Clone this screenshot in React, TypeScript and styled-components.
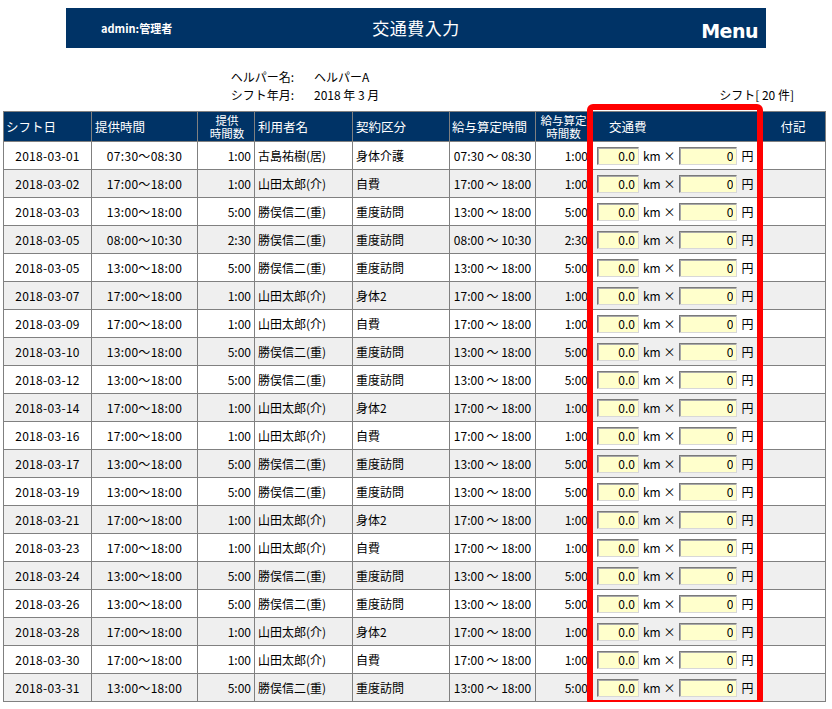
import React from 'react';
import styled, { createGlobalStyle } from 'styled-components';

const GlobalStyle = createGlobalStyle`
  html, body {
    margin: 0;
    padding: 0;
    background: #ffffff;
  }
  body {
    font-family: "Noto Sans CJK JP", "Liberation Sans", sans-serif;
    color: #000;
  }
`

const Page = styled.div`
  position: relative;
  width: 832px;
  padding-top: 8px;
`

const TopBar = styled.div`
  width: 700px;
  height: 40px;
  margin: 0 auto;
  background: #003366;
  color: #fff;
  display: grid;
  grid-template-columns: 1fr auto 1fr;
  align-items: center;
`

const UserName = styled.div`
  padding-left: 35px;
  font-size: 11px;
  font-weight: bold;
`

const Title = styled.div`
  font-size: 17px;
  letter-spacing: 0.5px;
  margin-top: -2px;
`

const MenuLink = styled.div`
  justify-self: end;
  padding-right: 8px;
  padding-top: 6px;
  font-family: "DejaVu Sans", sans-serif;
  font-size: 19px;
  font-weight: bold;
  letter-spacing: -0.5px;
`

const InfoArea = styled.div`
  display: flex;
  align-items: flex-end;
  margin-top: 20px;
  padding-left: 220px;
  padding-right: 38px;
  font-size: 12px;
`

const InfoGrid = styled.div`
  display: grid;
  grid-template-columns: 74px auto;
  column-gap: 20px;
  line-height: 18px;
`

const InfoLabel = styled.div`
  text-align: right;
`

const Count = styled.div`
  margin-left: auto;
  line-height: 18px;
`

const Table = styled.table`
  margin: 7px 0 0 3px;
  width: 822px;
  table-layout: fixed;
  border-collapse: collapse;
  font-size: 12px;
`

const HeadCell = styled.th<{ $align?: string; $pad?: number; $two?: boolean }>`
  height: 29px;
  padding: 0 0 0 ${(p) => p.$pad ?? 2}px;
  background: #003366;
  color: #fff;
  font-weight: normal;
  font-size: ${(p) => (p.$two ? '11.5px' : '12.5px')};
  text-align: ${(p) => p.$align || 'left'};
  line-height: ${(p) => (p.$two ? '13px' : '16px')};
  border: 1px solid #808080;
  white-space: nowrap;
  overflow: hidden;
`

const Row = styled.tr<{ $odd: boolean }>`
  background: ${(p) => (p.$odd ? '#efefef' : '#ffffff')};
`

const Cell = styled.td<{ $align?: string }>`
  height: 27px;
  padding: 0 3px;
  text-align: ${(p) => p.$align || 'left'};
  border: 1px solid #808080;
  white-space: nowrap;
  overflow: hidden;
`

const MonoCell = styled(Cell)`
  font-variant-numeric: tabular-nums;
  letter-spacing: 0.3px;
`

const FareBox = styled.div`
  display: flex;
  align-items: center;
  gap: 4px;
  padding-left: 2px;
`

const FareInput = styled.input<{ $w: number }>`
  box-sizing: border-box;
  width: ${(p) => p.$w}px;
  height: 18px;
  padding: 0 3px 0 0;
  margin: 0;
  background: #ffffcc;
  border: 1px solid;
  border-color: #7a7a7a #d8d8d8 #d8d8d8 #7a7a7a;
  box-shadow: inset 1px 1px 0 #a8a8a8;
  text-align: right;
  font-family: "Noto Sans CJK JP", "Liberation Sans", sans-serif;
  font-size: 12px;
  color: #000;
  outline: none;
`

const Unit = styled.span`
  font-size: 12px;
`

const Highlight = styled.div`
  position: absolute;
  left: 587px;
  top: 104px;
  width: 176px;
  height: 602px;
  box-sizing: border-box;
  border: 6px solid #ff0000;
  border-radius: 6px;
  pointer-events: none;
`

type Shift = {
  date: string
  from: string
  to: string
  hours: string
  user: string
  kind: string
}

const yamada = '山田太郎(介)'
const katsu = '勝俣信二(重)'

const shifts: Shift[] = [
  { date: '2018-03-01', from: '07:30', to: '08:30', hours: '1:00', user: '古島祐樹(居)', kind: '身体介護' },
  { date: '2018-03-02', from: '17:00', to: '18:00', hours: '1:00', user: yamada, kind: '自費' },
  { date: '2018-03-03', from: '13:00', to: '18:00', hours: '5:00', user: katsu, kind: '重度訪問' },
  { date: '2018-03-05', from: '08:00', to: '10:30', hours: '2:30', user: katsu, kind: '重度訪問' },
  { date: '2018-03-05', from: '13:00', to: '18:00', hours: '5:00', user: katsu, kind: '重度訪問' },
  { date: '2018-03-07', from: '17:00', to: '18:00', hours: '1:00', user: yamada, kind: '身体2' },
  { date: '2018-03-09', from: '17:00', to: '18:00', hours: '1:00', user: yamada, kind: '自費' },
  { date: '2018-03-10', from: '13:00', to: '18:00', hours: '5:00', user: katsu, kind: '重度訪問' },
  { date: '2018-03-12', from: '13:00', to: '18:00', hours: '5:00', user: katsu, kind: '重度訪問' },
  { date: '2018-03-14', from: '17:00', to: '18:00', hours: '1:00', user: yamada, kind: '身体2' },
  { date: '2018-03-16', from: '17:00', to: '18:00', hours: '1:00', user: yamada, kind: '自費' },
  { date: '2018-03-17', from: '13:00', to: '18:00', hours: '5:00', user: katsu, kind: '重度訪問' },
  { date: '2018-03-19', from: '13:00', to: '18:00', hours: '5:00', user: katsu, kind: '重度訪問' },
  { date: '2018-03-21', from: '17:00', to: '18:00', hours: '1:00', user: yamada, kind: '身体2' },
  { date: '2018-03-23', from: '17:00', to: '18:00', hours: '1:00', user: yamada, kind: '自費' },
  { date: '2018-03-24', from: '13:00', to: '18:00', hours: '5:00', user: katsu, kind: '重度訪問' },
  { date: '2018-03-26', from: '13:00', to: '18:00', hours: '5:00', user: katsu, kind: '重度訪問' },
  { date: '2018-03-28', from: '17:00', to: '18:00', hours: '1:00', user: yamada, kind: '身体2' },
  { date: '2018-03-30', from: '17:00', to: '18:00', hours: '1:00', user: yamada, kind: '自費' },
  { date: '2018-03-31', from: '13:00', to: '18:00', hours: '5:00', user: katsu, kind: '重度訪問' },
]

const widths = [88, 106, 57, 98, 97, 86, 56, 169, 65]

export default function App() {
  return (
    <>
      <GlobalStyle />
      <Page>
        <TopBar>
          <UserName>admin:管理者</UserName>
          <Title>交通費入力</Title>
          <MenuLink>Menu</MenuLink>
        </TopBar>

        <InfoArea>
          <InfoGrid>
            <InfoLabel>ヘルパー名:</InfoLabel>
            <div>ヘルパーA</div>
            <InfoLabel>シフト年月:</InfoLabel>
            <div>2018 年 3 月</div>
          </InfoGrid>
          <Count>シフト[ 20 件]</Count>
        </InfoArea>

        <Table>
          <colgroup>
            {widths.map((w, i) => (
              <col key={i} style={{ width: w }} />
            ))}
          </colgroup>
          <thead>
            <tr>
              <HeadCell>シフト日</HeadCell>
              <HeadCell $pad={3}>提供時間</HeadCell>
              <HeadCell $align="center" $two>
                提供
                <br />
                時間数
              </HeadCell>
              <HeadCell $pad={3}>利用者名</HeadCell>
              <HeadCell $pad={3}>契約区分</HeadCell>
              <HeadCell $pad={2}>給与算定時間</HeadCell>
              <HeadCell $align="center" $two $pad={0}>
                給与算定
                <br />
                時間数
              </HeadCell>
              <HeadCell $pad={17}>交通費</HeadCell>
              <HeadCell $align="center" $pad={0}>付記</HeadCell>
            </tr>
          </thead>
          <tbody>
            {shifts.map((s, i) => (
              <Row key={i} $odd={i % 2 === 1}>
                <MonoCell $align="center">{s.date}</MonoCell>
                <MonoCell $align="center">
                  {s.from}～{s.to}
                </MonoCell>
                <Cell $align="right">{s.hours}</Cell>
                <Cell>{s.user}</Cell>
                <Cell>{s.kind}</Cell>
                <Cell $align="center">
                  {s.from} ～ {s.to}
                </Cell>
                <Cell $align="right">{s.hours}</Cell>
                <Cell>
                  <FareBox>
                    <FareInput $w={42} readOnly defaultValue="0.0" />
                    <Unit>km ×</Unit>
                    <FareInput $w={58} readOnly defaultValue="0" />
                    <Unit>円</Unit>
                  </FareBox>
                </Cell>
                <Cell />
              </Row>
            ))}
          </tbody>
        </Table>

        <Highlight />
      </Page>
    </>
  )
}
